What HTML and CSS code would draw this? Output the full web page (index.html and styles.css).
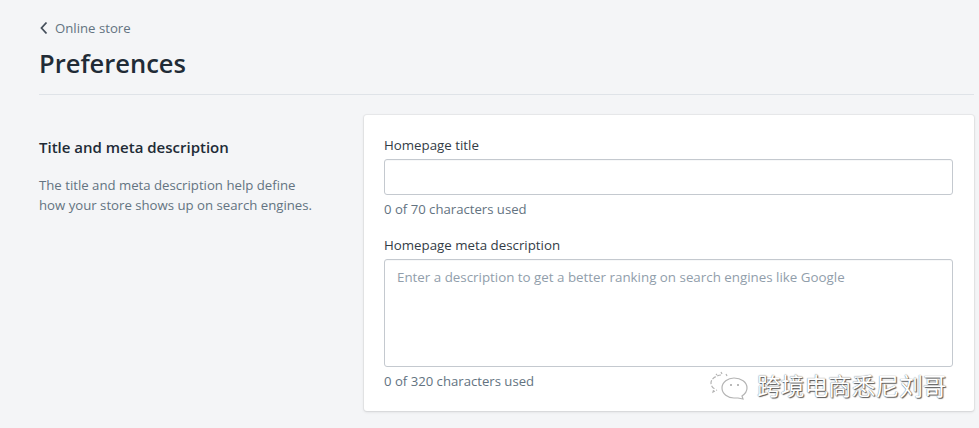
FILE: index.html
```
<!DOCTYPE html>
<html lang="en">
<head>
<meta charset="utf-8">
<title>Preferences</title>
<link rel="stylesheet" href="styles.css">
</head>
<body>
<main class="page">
  <header class="header">
    <a class="back" href="#">
      <svg class="back-icon" width="10" height="14" viewBox="0 0 10 14"><path d="M7.500 1.500 2.500 7l5 5.500" fill="none" stroke="#454f5b" stroke-width="1.8"/></svg>
      <span>Online store</span>
    </a>
    <h1 class="title">Preferences</h1>
  </header>
  <section class="layout">
    <div class="intro">
      <h2 class="intro-title">Title and meta description</h2>
      <p class="intro-text">The title and meta description help define<br>how your store shows up on search engines.</p>
    </div>
    <div class="card">
      <label class="label">Homepage title</label>
      <div class="input"></div>
      <p class="help">0 of 70 characters used</p>
      <label class="label label-next">Homepage meta description</label>
      <div class="textarea">Enter a description to get a better ranking on search engines like Google</div>
      <p class="help">0 of 320 characters used</p>
    </div>
  </section>
</main>
<div class="watermark">
  <svg class="watermark-icon" width="42" height="32" viewBox="0 0 42 32" fill="none" stroke="#b4b4b4" stroke-width="1.2">
    <path d="M13 6c-2 0-3 .5-5 1.500C5 9 3 11 3 14c0 2 1 4 3 5.500l-1 3.500 4-2" stroke-dasharray="4 1.500"/>
    <path d="M8 5l1 1M13 3l1 2M18 5l1 2"/>
    <path d="M26 9c-6 0-12 4-12 10s6 10 12 10c1.500 0 3 0 4 0l5 1-1-3c3-2 5-5 5-8 0-6-6-10-13-10z"/>
    <path d="M22 16h2M29 16h2" stroke="#777"/>
  </svg>
  <span class="watermark-text">跨境电商悉尼刘哥</span>
</div>
</body>
</html>
```
FILE: styles.css
```
* { box-sizing: border-box; }
html, body { margin: 0; height: 428px; overflow: hidden; }
body {
  background: #f4f5f7;
  color: #212b36;
  font-family: "Open Sans", "Noto Sans", sans-serif;
  position: relative;
}
.page { padding: 19px 5px 0 39px; }
.header { border-bottom: 1px solid #dfe3e8; height: 76px; }
.back {
  display: flex;
  align-items: center;
  gap: 6px;
  height: 18px;
  color: #637381;
  font-size: 13.2px;
  text-decoration: none;
}
.back-icon { display: block; }
.title {
  margin: 8px 0 0;
  font-size: 25.5px;
  line-height: 36px;
  font-weight: 600;
  letter-spacing: 0;
}
.layout {
  display: flex;
  padding-top: 20px;
}
.intro { width: 325px; flex: none; padding-top: 21px; }
.intro-title {
  margin: 0;
  font-size: 15px;
  line-height: 22px;
  font-weight: 600;
}
.intro-text {
  margin: 17px 0 0;
  font-size: 13.2px;
  line-height: 20px;
  color: #637381;
}
.card {
  flex: 1;
  height: 296px;
  background: #fff;
  border-radius: 3px;
  box-shadow: 0 0 0 1px rgba(63,63,68,.05), 0 1px 3px rgba(63,63,68,.15);
  padding: 20px 21px 0 20px;
}
.label { display: block; font-size: 13.3px; line-height: 20px; height: 24px; color: #333c46; }
.label-next { margin-top: 16px; }
.input, .textarea {
  border: 1px solid #c4c9cf;
  border-radius: 3px;
  background: #fff;
  box-shadow: inset 0 1px 0 rgba(99,115,129,.05);
}
.input { height: 36px; }
.textarea {
  height: 108px;
  padding: 7px 12px;
  font-size: 13.35px;
  line-height: 20px;
  color: #919eab;
}
.help {
  margin: 4px 0 0;
  font-size: 13.15px;
  line-height: 20px;
  color: #637381;
}
.watermark {
  position: absolute;
  left: 708px;
  top: 369px;
  display: flex;
  align-items: center;
  gap: 7px;
}
.watermark-text {
  font-family: "Noto Sans CJK SC", sans-serif;
  font-size: 23.7px;
  line-height: 30px;
  color: #fff;
  text-shadow: 1px 1px 1px #555, 0 0 1px #555;
}
```
